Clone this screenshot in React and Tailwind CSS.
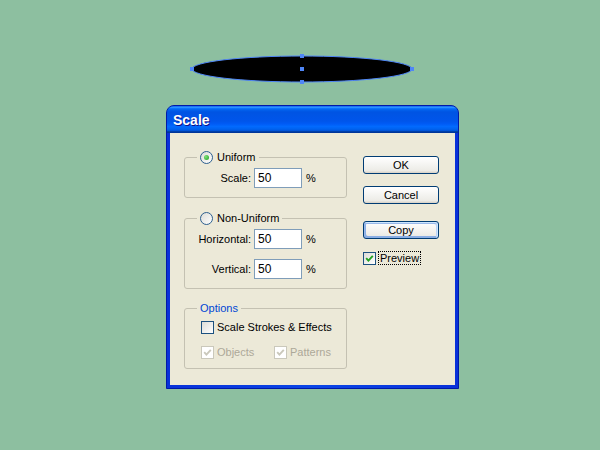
import React from "react";

function Radio({ checked }) {
  return (
    <span className="w-[13px] h-[13px] rounded-full border border-[#2c5f8f] bg-[linear-gradient(135deg,#dcdcd7,#ffffff)] flex items-center justify-center shrink-0">
      {checked && <span className="w-[5px] h-[5px] rounded-full bg-[radial-gradient(circle_at_35%_35%,#7fe07a,#21a121)]" />}
    </span>
  );
}

function Check({ checked, disabled }) {
  return (
    <span
      className={
        disabled
          ? "w-[13px] h-[13px] border border-[#cac8bb] bg-white flex items-center justify-center shrink-0"
          : "w-[13px] h-[13px] border border-[#1c5180] bg-[linear-gradient(135deg,#dcdcd7,#ffffff)] flex items-center justify-center shrink-0"
      }
    >
      {checked && (
        <svg width="9" height="9" viewBox="0 0 9 9">
          <path
            d="M1.2 4.2 L3.4 6.6 L7.8 1.8"
            stroke={disabled ? "#cac8bb" : "#21a121"}
            strokeWidth="1.9"
            fill="none"
          />
        </svg>
      )}
    </span>
  );
}

function Group({ legend, className, children }) {
  return (
    <div className={"relative border border-[#c4c1b2] rounded-[3px] " + className}>
      <div className="absolute left-[12px] top-[-8px] h-[15px] px-[3px] bg-[#ece9d8] flex items-center">
        {legend}
      </div>
      {children}
    </div>
  );
}

function Row({ label }) {
  return (
    <div className="flex items-center h-[20px]">
      <span className="w-[66px] text-right">{label}</span>
      <div className="ml-[3px] w-[48px] h-[20px] border border-[#7f9db9] bg-white flex items-center pl-[3px] text-[12px]">
        50
      </div>
      <span className="ml-[4px]">%</span>
    </div>
  );
}

function Button({ children, focused }) {
  return (
    <div
      className={
        focused
          ? "w-[76px] h-[18px] border border-[#003c74] rounded-[3px] bg-[linear-gradient(180deg,#ffffff,#ecebe6_86%,#d6d0c5)] flex items-center justify-center shadow-[inset_-1px_1px_#cee7ff,inset_1px_2px_#98b8ea,inset_-2px_2px_#bcd4f6,inset_1px_-1px_#89ade4,inset_2px_-2px_#89ade4]"
          : "w-[76px] h-[18px] border border-[#003c74] rounded-[3px] bg-[linear-gradient(180deg,#ffffff,#ecebe6_86%,#d6d0c5)] flex items-center justify-center"
      }
    >
      {children}
    </div>
  );
}

export default function App() {
  return (
    <div className="w-[600px] h-[450px] bg-[#8dbfa0] font-['Liberation_Sans',Arial,sans-serif] text-[11px] text-black flex flex-col overflow-hidden">
      <svg className="ml-[187px] mt-[53px] shrink-0" width="230" height="32" viewBox="0 0 230 32">
        <ellipse cx="115" cy="16" rx="110" ry="13" fill="#000" stroke="#4f86f7" strokeWidth="1" />
        <g fill="#4f86f7" shapeRendering="crispEdges">
          <rect x="113" y="1" width="4" height="4" />
          <rect x="113" y="14" width="4" height="4" />
          <rect x="113" y="27" width="4" height="4" />
          <rect x="3" y="14" width="4" height="4" />
          <rect x="223" y="14" width="4" height="4" />
        </g>
      </svg>

      <div className="ml-[166px] mt-[20px] w-[293px] rounded-t-[8px] border border-[#0019a8] bg-[#0a3fdc] overflow-hidden">
        <div className="h-[27px] flex items-center pl-[6px] pt-[2px] bg-[linear-gradient(180deg,#0058ee_0%,#3593ff_4%,#288eff_6%,#127dff_8%,#036ffc_10%,#0262ee_14%,#0057e5_20%,#0054e3_24%,#0055eb_56%,#005bf5_66%,#026afe_76%,#0062ef_86%,#0052d6_92%,#0040ab_94%,#003092_100%)]">
          <span className="text-white font-bold text-[14px] [text-shadow:1px_1px_0_#0f1089]">Scale</span>
        </div>
        <div className="px-[3px] pb-[3px] bg-[linear-gradient(90deg,#0831d9,#0a46e6_50%,#0831d9)]">
          <div className="bg-[#ece9d8] flex h-[252px]">
            <div className="ml-[14px] w-[163px] flex flex-col">
              <Group
                className="mt-[24px] h-[41px] pt-[10px]"
                legend={
                  <>
                    <Radio checked />
                    <span className="ml-[4px]">Uniform</span>
                  </>
                }
              >
                <Row label="Scale:" />
              </Group>
              <Group
                className="mt-[20px] h-[71px] pt-[10px] flex flex-col gap-[10px]"
                legend={
                  <>
                    <Radio />
                    <span className="ml-[4px]">Non-Uniform</span>
                  </>
                }
              >
                <Row label="Horizontal:" />
                <Row label="Vertical:" />
              </Group>
              <Group
                className="mt-[19px] h-[61px] pt-[12px] pl-[16px] flex flex-col gap-[12px]"
                legend={<span className="text-[#0046d5]">Options</span>}
              >
                <div className="flex items-center h-[13px]">
                  <Check />
                  <span className="ml-[3px]">Scale Strokes &amp; Effects</span>
                </div>
                <div className="flex items-center h-[13px] text-[#aca899]">
                  <div className="flex items-center w-[73px]">
                    <Check checked disabled />
                    <span className="ml-[3px]">Objects</span>
                  </div>
                  <div className="flex items-center">
                    <Check checked disabled />
                    <span className="ml-[3px]">Patterns</span>
                  </div>
                </div>
              </Group>
            </div>
            <div className="ml-[16px] flex flex-col pt-[23px]">
              <Button>OK</Button>
              <div className="mt-[12px]">
                <Button>Cancel</Button>
              </div>
              <div className="mt-[17px]">
                <Button focused>Copy</Button>
              </div>
              <div className="mt-[12px] flex items-center">
                <Check checked />
                <span className="ml-[2px] px-[1px] h-[14px] flex items-center border border-dotted border-black">
                  Preview
                </span>
              </div>
            </div>
          </div>
        </div>
      </div>
    </div>
  );
}
